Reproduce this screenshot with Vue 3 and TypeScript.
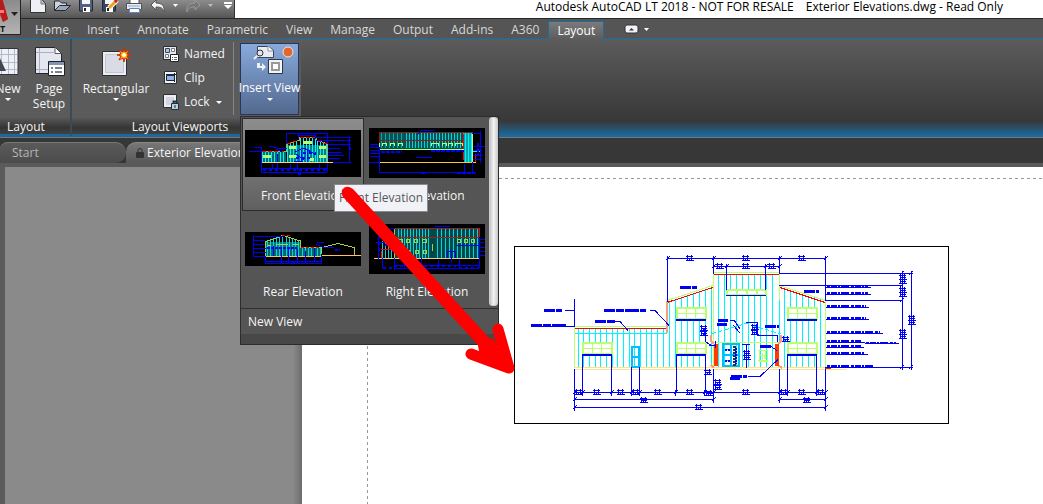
<script setup lang="ts">
import { ref } from 'vue'

interface Stroke { d: string; c: string; w?: number; dash?: string }
interface View { name: string; w: number; h: number; strokes: Stroke[] }

const BLUE = '#0000f5'
const CYAN = '#00f4ff'
const LIME = '#b9ff70'
const RED = '#ff0000'

const tabs = ['Home', 'Insert', 'Annotate', 'Parametric', 'View', 'Manage', 'Output', 'Add-ins', 'A360', 'Layout']
const active = ref('Layout')
const selected = ref('Front Elevation')

const line = (x1: number, y1: number, x2: number, y2: number) => `M${x1} ${y1}L${x2} ${y2}`
const box = (x: number, y: number, w: number, h: number) => `M${x} ${y}h${w}v${h}h${-w}z`

/* vertical siding boards; the top edge slopes from y1 to y2 */
function boards(x1: number, x2: number, step: number, y1: number, y2: number, base: number): string {
  let d = ''
  for (let x = x1; x <= x2; x += step) {
    const top = Math.round(y1 + ((y2 - y1) * (x - x1)) / (x2 - x1))
    d += `M${Math.floor(x) + 0.5} ${top}V${base}`
  }
  return d
}

/* window with a three by two grid of panes */
function panes(x: number, y: number, w: number, h: number): string {
  return box(x, y, w, h) + line(x + w / 3, y, x + w / 3, y + h) + line(x + (2 * w) / 3, y, x + (2 * w) / 3, y + h) + line(x, y + h / 2, x + w, y + h / 2)
}

/* dimension chain with end ticks */
function chain(y: number, xs: number[]): string {
  let d = line(xs[0], y, xs[xs.length - 1], y)
  for (const x of xs) d += line(x, y - 3, x, y + 3) + line(x - 2, y + 2, x + 2, y - 2)
  return d
}

/* dimension figures, drawn as two tight rows */
function figures(points: number[][]): string {
  return points.map(([x, y]) => `M${x - 4} ${y - 1.5}h7M${x - 3} ${y + 0.5}h6M${x - 4} ${y + 2.5}h8M${x - 2.5} ${y - 3}v6M${x + 1.5} ${y - 3}v6M${x - 0.5} ${y}v2`).join('')
}

const windows = [[582.5, 342.5], [676.5, 307.5], [676.5, 342.5], [787.5, 307.5], [787.5, 342.5]]
const notes = [[826, 287, 45], [826, 294, 45], [826, 307, 43], [826, 319, 43], [826, 333, 57], [826, 342, 39], [865, 343.5, 34], [826, 347, 38], [826, 354, 42], [826, 367, 52]]

const elevation: Stroke[] = [
  { c: CYAN, d: boards(578, 664, 5.67, 329, 329, 367) + boards(669, 712, 6, 301, 288, 367) + boards(718, 776, 6, 275, 275, 367) + boards(784, 822, 6, 288, 300, 367) + 'M575 333.5h92M713.5 274V343M779.5 274V343' },
  { c: '#ffffff', w: 12, d: 'M677 313.5h29M677 348.5h29M788 313.5h29M788 348.5h29M583 348.5h28' },
  { c: '#ffffff', w: 6, d: 'M726 292h40' },
  { c: LIME, d: windows.map(([x, y]) => panes(x, y, 29, 11)).join('') },
  { c: LIME, w: 2, d: windows.map(([x, y]) => box(x, y, 29, 11)).join('') + box(727, 290, 39, 5) + 'M736.5 290v5M746.5 290v5M756.5 290v5' },
  { c: LIME, d: 'M574.5 367V326.5H667M667 300.5L713 285.5M713.5 367V273M713 272.5H780M779.5 273V300M779 285.5L826 300.5M825.5 300V367M713 342.5H779M758 350h10M759 351v10h8v-10M762 353v7M765 351v8M758 360h10M760 355h4v4' },
  { c: RED, d: 'M575 328.5H667M667 302.5L713 287.5M714 274.5H779M780 287.5L825 302.5' },
  { c: '#ffe08c', d: 'M574 367.5H826M574 369.5H846' },
  { c: '#ff9c80', w: 2, d: 'M667 301V333M711 335v6l3 3M711 365l3 3M781 335v6l-3 3M778 365l4 3' },
  { c: '#c0361a', w: 2, d: 'M825 368h6' },
  { c: '#00bfff', w: 2, d: box(632, 347, 7, 20) + 'M632 357h7' + box(723, 344, 16, 22) + 'M731 344v22M723 355h16' },
  { c: '#ff3c00', w: 4, d: 'M716 344V366M777 344V366' },
  { c: '#183a50', w: 3, dash: '2 1', d: 'M734 346V366' },
  { c: CYAN, dash: '5 2', d: 'M711 334L746 323.5L781 334' },
  { c: BLUE, w: 2, d: 'M582 355h30M676 320h30M676 355h30M787 320h30M787 355h30' },
  { c: BLUE, d: 'M726 295.5h40M582.5 355v38M611.5 355v38M676.5 355v38M705.5 355v38M787.5 355v38M816.5 355v38M631.5 367v26M639.5 367v26M574.5 299V327M574.5 369V408M713.5 369V402M779.5 369V402M825.5 369V408M667.5 256V302M713.5 256V274M779.5 256V274M825.5 256V301M726.5 265V290M765.5 265V290' },
  { c: BLUE, d: chain(258.5, [667.5, 713.5, 779.5, 825.5]) + chain(266.5, [713.5, 726.5, 765.5, 779.5]) + chain(392.5, [574.5, 582.5, 611.5, 631.5, 639.5, 675.5, 704.5, 713.5, 779.5, 787.5, 816.5, 825.5]) + chain(399.5, [574.5, 713.5]) + chain(399.5, [779.5, 825.5]) + chain(407.5, [574.5, 825.5]) },
  { c: BLUE, d: 'M779 273.5H913M779 285.5H903M825 300.5H903M825 367.5H913M902.5 271V370M911.5 271V370M900 275l4-4M900 287l4-4M900 302l4-4M900 369l4-4M909 275l4-4M909 369l4-4' },
  { c: BLUE, d: figures([[690, 258], [746, 258], [802, 258], [720, 266], [746, 266], [772, 266], [579, 392], [597, 392], [621, 392], [636, 392], [658, 392], [690, 392], [709, 393], [746, 392], [784, 392], [802, 392], [821, 392], [644, 400], [699, 407], [807, 400], [903, 277], [903, 281], [903, 290], [903, 294], [903, 332], [903, 336], [912, 318], [912, 322], [708, 372], [718, 382], [718, 387], [747, 353], [747, 357], [704, 328], [704, 333], [755, 327], [755, 332], [786, 339]]) },
  { c: BLUE, w: 3, dash: '11 1 8 1 14 1', d: 'M604 310.5h42M595 321.5h20M531 325.5h36M544 310.5h18M680 287.5h17M804 291.5h15M718 320.5h10M717 324.5h10M765 326.5h14M760 346.5h11M731 376.5h16M730 378.5h10' },
  { c: BLUE, d: 'M531 326.5h43M565 310.5h9M650 310.5h5l14 15M615 321.5h5l8 9M730 320h4l6 9M733 325l7 8M746 322.5h11v13h20v6M704 328l2 14 6 4M748 376.5h12l18-17M709 345.5h7M715.5 341v7M746.5 344v24M742 344.5h8M771 346.5l6 4' },
  { c: '#16b5ff', d: 'M725 349h5M725 360h5' },
  { c: BLUE, w: 2, dash: '3 1 6 1 2 1 8 2', d: notes.map(([x, y, w]) => `M${x + 1} ${y - 1}h${w - 4}`).join('') },
  { c: BLUE, d: notes.map(([x, y, w]) => `M${x} ${Math.floor(y) + 0.5}h${w}`).join('') },
  { c: BLUE, w: 2, dash: '2 1', d: 'M725 350h6M725 361h6M736 348v16' },
]

const TEAL = '#006a6a'

const views: View[] = [
  {
    name: 'Front Elevation', w: 116, h: 47, strokes: [
      { c: TEAL, w: 11, d: 'M17 27h24' },
      { c: '#007d7d', w: 18, d: 'M42 24h40' },
      { c: CYAN, d: boards(17, 40, 3, 22, 22, 32) + boards(42, 53, 3, 15, 11, 32) + boards(55, 70, 3, 8, 8, 32) + boards(72, 83, 3, 11, 15, 32) },
      { c: '#a5b34a', d: 'M16.5 32V21.5H41.5V14.5L54 10.5V7.5H71V10L82.5 14V32' },
      { c: RED, dash: '4 2', d: 'M17 21.5H41M42 14L53 10.5M55 7.5H70M72 10.5L82 14' },
      { c: LIME, w: 3, d: 'M18 26.5h8M44 17.5h7M44 26.5h7M58 12.5h9M74 17.5h7M74 26.5h7M65 29h4' },
      { c: BLUE, d: 'M41 3.5h42M52 5.5h19M41.5 3v11M53.5 3v6M70.5 3v6M82.5 3v11M4 21.5h12M9 17.5h8M16.5 17v25M17 38.5h65M16 42.5h66M82.5 32v10M52.5 32v9M71 7.5h35M71 10.5h35M83 14.5h23M83 18.5h12M83 22.5h14M83 25.5h16M83 28.5h12M83 32.5h23M104.5 7v25M27.5 34v5M32.5 24v15M50 22l8-4 5 2 8 5M56.5 20v12M62.5 19v13M51 24l8 6M49 31h9M24 16l8 2h10M31 19l6 3M45.5 34v5M74.500 34v5' },
      { c: BLUE, w: 2, dash: '3 3', d: 'M18 40h64M58 23h13M51 28h14M105 17v6M53 44h6' },
      { c: '#ffd27a', d: 'M17 32.5h71' },
    ],
  },
  {
    name: 'Left Elevation', w: 116, h: 50, strokes: [
      { c: '#005558', w: 17, d: 'M11 12.5h84' },
      { c: '#00a9ad', d: boards(12, 34, 4, 5, 5, 20) },
      { c: '#00d2d8', d: boards(37, 94, 3, 5, 5, 20) },
      { c: '#008589', w: 8, d: 'M95 19h8' },
      { c: '#00a5a9', w: 30, d: 'M95 19h8' },
      { c: CYAN, d: 'M96.5 5v29M99.5 5v29M102.5 5v29M103 23.5h9' },
      { c: '#8c1a1a', d: 'M10 4.5h94M10 12.5h84M10.5 4v17' },
      { c: RED, d: 'M94.5 6v26M106.5 26v8' },
      { c: LIME, d: 'M10.5 15v6.5H95M103.5 5v29M13.5 18v-3h4v3M21.5 18v-3h4v3M29.5 18v-3h4v3M62.5 18v-3h7v3M73.5 18v-3h4v3M79.5 18v-3h4v3M86.5 18v-3h7v3' },
      { c: '#ffc83c', d: 'M10 34.5h97' },
      { c: BLUE, d: 'M53 2.5h13M48 7l5-5M10.5 20v25M1 16.5h9M1 19.5h10M1 22.5h9M1 25.5h9M1 28.5h9M0 34.5h10M10 44.5h97M103.5 34v12M95.5 36v8M103 5.5h9M111.5 3v32M104 18h12M104 22h9M104 27h10M104 31h9M47 29.5h16' },
      { c: BLUE, w: 2, dash: '4 1', d: 'M12 24h21M62 23h33M109 15v12M52 45h4M88 45h18' },
    ],
  },
  {
    name: 'Rear Elevation', w: 116, h: 34, strokes: [
      { c: '#007a7a', w: 14, d: 'M21 17h34' },
      { c: '#006969', w: 8, d: 'M21 20h55' },
      { c: '#00d5dd', d: boards(22, 38, 3, 9, 4, 24) + boards(41, 54, 3, 5, 9, 24) + boards(57, 76, 3, 16, 16, 24) },
      { c: '#a6d23c', d: 'M20.5 24V9.5L38 3.5L55.5 9V15H76.5V22M77 15.5L93 11.5L109 15.5V23M22 13h4M31 12h12M48 12h6' },
      { c: RED, dash: '3 2', d: 'M37 3.5h8M56 15.5h20' },
      { c: '#ffc15c', d: 'M20 24.5h57M77 23.5h39' },
      { c: BLUE, d: 'M8.5 3v22M8 4.5h30M8 8.5h12M8 12.5h12M8 16.5h13M8 20.5h13M8 24.5h12M20.5 24v8M20 29.5h57M20 31.5h57M76.5 24v8M28.5 14v10M36.5 17v14M43.5 17v14M52.5 17v14M60.5 19v12M69.5 16v14M71 12l6 3h12M72 10.5h7' },
      { c: BLUE, w: 2, dash: '3 1', d: 'M22 16h30M47 31h4M90 18h5' },
    ],
  },
  {
    name: 'Right Elevation', w: 116, h: 50, strokes: [
      { c: '#00484a', w: 29, d: 'M26 19.5h84' },
      { c: '#00d5dd', d: boards(29, 60, 3, 5, 5, 34) + boards(68, 109, 4, 5, 5, 34) + boards(13, 24, 3, 17, 17, 34) },
      { c: '#a81c1c', d: 'M25 4.5h85M25.5 4v14M25 13.5h85' },
      { c: RED, d: 'M110.5 4v9M12.5 27v8M12 25.5h13' },
      { c: '#a7d23e', d: 'M25.5 34V5M30.5 18v-3h3v3zM37.5 18v-3h3v3zM45.5 18v-3h3v3zM53.5 18v-3h4v3zM88.5 18v-3h3v3zM95.5 18v-3h3v3zM102.5 18v-3h3v3zM37.5 29v-3h3v3zM46.5 29v-3h3v3zM54.5 29v-3h3v3zM63.5 20v7' },
      { c: '#ffc978', d: 'M5 34.5h106' },
      { c: BLUE, d: 'M65 2.5h16M6 4.5h20M9.5 3v33M13.5 34v10M25.5 34v12M25 44.5h85M25 41.5h85M110.5 14v30M111 15.5h5M111 18.5h4M111 23.5h5M111 27.5h5M111 31.5h5M87 21.5h23M78.5 34v-7h8v7M82.5 27v12M35.5 34v10M52.5 34v8M69.5 36v8M90.5 35v9M7 18.5h14M8 13.5h10' },
      { c: BLUE, w: 2, dash: '3 3', d: 'M25 42h62M14 44h9M90 44h20M10 18v10M16 21h12' },
    ],
  },
]
</script>

<template>
  <div class="app">
    <header class="titlebar">
      <div class="quick">
        <button aria-label="New file"><svg width="20" height="18"><path d="M2.500-1v13.500h15V4l-4-5" fill="#eef0f6" stroke="#333" /><path d="M13 0v4h4" fill="#b9bdc7" stroke="#777" /></svg></button>
        <button aria-label="Open"><svg width="20" height="18"><path d="M2.500 10V1h5l2 2h5v3" fill="#cdd3df" stroke="#252a33" /><path d="M2.500 10.500l5-5h11l-5 5z" fill="#9ba6b7" stroke="#252a33" /></svg></button>
        <button aria-label="Save"><svg width="20" height="18"><path d="M3.500-1v12h13V-1z" fill="#536080" stroke="#20283a" /><path d="M6 0h8v4H6z" fill="#f2f4f8" /><path d="M7 7h7v5H7z" fill="#fff" /><path d="M8 8h2v3H8z" fill="#222" /></svg></button>
        <button aria-label="Save as"><svg width="20" height="18"><path d="M2.500-1v12h13V-1z" fill="#39435c" stroke="#20283a" /><path d="M5 0h8v4H5z" fill="#f2f4f8" /><path d="M6 7h7v5H6z" fill="#fff" /><path d="M7 8h2v3H7z" fill="#222" /><path d="M9 8l8-8" stroke="#fff" stroke-width="5" /><path d="M9 8l7-7" stroke="#f0a21c" stroke-width="3" /><path d="M15 2l2-2" stroke="#c22" stroke-width="3" /></svg></button>
        <button aria-label="Plot"><svg width="20" height="18"><path d="M6-1h9v6H6z" fill="#fff" stroke="#555" /><path d="M2.500 3.500h15v6h-15z" fill="#e7ebf4" stroke="#4c515a" /><path d="M5.500 8.500h10v4h-10z" fill="#fff" stroke="#5c88c0" /><path d="M4 6h12" stroke="#9aa6ba" /></svg></button>
        <button aria-label="Undo"><svg width="20" height="18"><path d="M8 0L3 5l5 5V7c5 0 7 1 8 5 1-6-2-9-8-9z" fill="#f4f4f4" stroke="#555" /></svg></button>
        <button class="tiny" aria-label="Undo list"><svg width="7" height="18"><path d="M1 4h5L3.500 7z" fill="#fff" /></svg></button>
        <button aria-label="Redo"><svg width="20" height="18"><path d="M12 0l5 5-5 5V7c-5 0-7 1-8 5-1-6 2-9 8-9z" fill="#777" stroke="#999" /></svg></button>
        <button class="tiny" aria-label="Redo list"><svg width="7" height="18"><path d="M1 4h5L3.500 7z" fill="#bbb" /></svg></button>
        <button class="custom" aria-label="Customize"><svg width="10" height="18"><path d="M1 2h8v2H1zM1 5h8L5 9z" fill="#fff" /></svg></button>
      </div>
      <h1><span>Autodesk AutoCAD LT 2018 - NOT FOR RESALE</span><span>Exterior Elevations.dwg - Read Only</span></h1>
      <button class="logo" aria-label="Application menu">
        <svg width="20" height="34"><path d="M-3-2h5l6 21-5 3-3-7-4-2z" fill="#d92a25" /><path d="M2-2l6 21-5 3L-2 4z" fill="#b51c1c" /><path d="M-2 10h6v3h-6z" fill="#f77" /><path d="M11 12h7l-3.500 4z" fill="#222" /></svg>
        <b>LT</b>
      </button>
    </header>

    <nav class="tabs">
      <button v-for="t in tabs" :key="t" :class="{ on: t === active }" @click="active = t">{{ t }}</button>
      <button class="toggle" aria-label="Minimize ribbon">
        <svg width="30" height="12"><rect x="1" y="1" width="13" height="8" rx="2" fill="#f2f3f6" stroke="#33353b" /><path d="M5 6.500h5L7.500 4z" fill="#333" /><path d="M20 4h5l-2.500 3z" fill="#fff" /></svg>
      </button>
    </nav>

    <section class="ribbon">
      <div class="panel first">
        <div class="tools">
          <button class="big new">
            <svg width="34" height="32"><path d="M-1 2.500h22v26H-1z" fill="#edf0f6" stroke="#30343c" /><path d="M4.500 3v25M11.500 3v25M17.500 3v25M-1 8.500h21M-1 16.500h21M-1 23.500h21" stroke="#b3b9c7" /><path d="M-6 25L1 8l8 17z" fill="#3f4654" /></svg>
            <span>New</span><i></i>
          </button>
          <button class="big setup">
            <svg width="34" height="32"><path d="M3.500 1.500h20l6 6v20h-26z" fill="#e4e7ef" stroke="#23262c" /><path d="M23 1.500v6h6" fill="#fff" stroke="#555" /><path d="M7.500 2v25M4 6.500h20M4 23.500h15" stroke="#aab0c0" /><path d="M16.500 15.500h16v14h-16z" fill="#fff" stroke="#1d2025" /><path d="M17 17.500h15" stroke="#8494b0" stroke-width="3" /><path d="M19 22h2M23 22h7M19 26h2M23 26h7" stroke="#778296" stroke-width="2" /></svg>
            <span>Page<br>Setup</span>
          </button>
        </div>
        <h2>Layout</h2>
      </div>
      <div class="panel viewports">
        <div class="tools">
          <button class="big rect">
            <svg width="34" height="32"><path d="M3.500 5.500h24v24h-24z" fill="#eceef3" stroke="#2d2f34" /><path d="M6.500 8.500h18v18h-18z" fill="#d9dce5" stroke="#c1c5d0" /><path d="M25 2l1 4 4-2-2 4 4 1-4 1 2 4-4-2-1 4-1-4-4 2 2-4-4-1 4-1-2-4 4 2z" fill="#ffb000" stroke="#c82a10" /><circle cx="25" cy="9" r="2" fill="#fffbe0" /></svg>
            <span>Rectangular</span><i></i>
          </button>
          <div class="stack">
            <button><svg width="16" height="16"><path d="M.500.500h13v13H.500z" fill="#e5e8ef" stroke="#2a2d33" /><path d="M2.500 2.500h4v4h-4z" fill="#a9c6ec" stroke="#3c4453" /><path d="M8.500 2.500h3v3h-3zM2.500 8.500h3v3h-3z" fill="#fff" stroke="#777" /><path d="M7.500 8.500h8v7h-8z" fill="#fff" stroke="#222" /><path d="M9 11.500h1M11 11.500h3M9 13.500h1M11 13.500h3" stroke="#5a6578" /></svg>Named</button>
            <button><svg width="16" height="16"><path d="M1.500 1.500h12v12h-12z" fill="#eef1f6" stroke="#2a2d33" /><path d="M3.500 5.500h8v5h-8z" fill="#8fb4e4" stroke="#1b2535" /><path d="M3 4.500h10M11.500 3v9" stroke="#1b2535" /></svg>Clip</button>
            <button><svg width="16" height="16"><path d="M.500.500h13v13H.500z" fill="#eceef3" stroke="#2d2f34" /><path d="M3 3h8v8H3z" fill="#d3d6df" /><path d="M10.500 10V7.500h3V10" fill="none" stroke="#253340" stroke-width="2" /><path d="M8.500 9.500h7v6h-7z" fill="#b9cfdf" stroke="#22303b" /><path d="M12 11v3" stroke="#22303b" /></svg>Lock<i></i></button>
          </div>
        </div>
        <h2>Layout Viewports</h2>
      </div>
      <div class="dropdown">
        <button class="insert">
          <svg width="48" height="34"><path d="M11.500 2.500h11l5 4v7h-16z" fill="#e7ebf2" stroke="#38445a" /><path d="M22 2v5h5" fill="#fff" stroke="#8893a5" /><circle cx="14" cy="9" r="3" fill="#dfe6ef" stroke="#333" /><path d="M11.500 11.500L8 15" stroke="#eee" stroke-width="2" /><circle cx="42" cy="8" r="5" fill="#e2672d" stroke="#f3e6dd" /><path d="M11 19h3v3h2v-3l4 4-4 4v-3h-5z" fill="#eef0f4" /><path d="M22.500 15.500h14v14h-14z" fill="#f3f4f6" stroke="#2c3646" /><path d="M26 19h7v7h-7z" fill="#fff" stroke="#999" stroke-width="2" /></svg>
          <span>Insert View</span><i></i>
        </button>
        <div class="menu">
          <div class="gallery">
            <div class="grid">
              <button v-for="v in views" :key="v.name" :class="{ on: v.name === selected }" @click="selected = v.name">
                <span class="thumb">
                  <svg :width="v.w" :height="v.h" :viewBox="`0 0 ${v.w} ${v.h}`" fill="none" shape-rendering="crispEdges">
                    <path v-for="(s, i) in v.strokes" :key="i" :d="s.d" :stroke="s.c" :stroke-width="s.w ?? 1" :stroke-dasharray="s.dash" />
                  </svg>
                </span>
                <span>{{ v.name }}</span>
              </button>
            </div>
            <div class="scroll"></div>
          </div>
          <button class="newview">New View</button>
          <div class="grip"></div>
          <div class="tip" role="tooltip">Front Elevation</div>
        </div>
      </div>
      <div class="rest"></div>
    </section>

    <nav class="files">
      <button class="start">Start</button>
      <button class="file"><svg width="8" height="12"><path d="M2 6V3.500a2 2 0 0 1 4 0V6" fill="none" stroke="#333" stroke-width="1" /><rect y="5" width="8" height="6" rx="1" fill="#333" /></svg>Exterior Elevations</button>
    </nav>

    <main class="canvas">
      <div class="margin"></div>
      <div class="paper">
        <div class="printable">
          <svg class="drawing" width="435" height="178" viewBox="514 246 435 178" fill="none" shape-rendering="crispEdges">
            <path d="M514.500 246.500h434v177h-434z" stroke="#000" fill="#fff" />
            <path v-for="(s, i) in elevation" :key="i" :d="s.d" :stroke="s.c" :stroke-width="s.w ?? 1" :stroke-dasharray="s.dash" />
          </svg>
        </div>
      </div>
    </main>

    <svg class="arrow" width="180" height="195" viewBox="338 184 180 195" fill="#f00">
      <path d="M344 198L478 345Q484 356 494 356Q499 350 491 340L353 189Q346 184 342 190Q341 195 344 198z" />
      <path d="M498 329L509 368L471 354M484 346L506 366" fill="none" stroke="#f00" stroke-width="11" stroke-linecap="round" stroke-linejoin="round" />
      <path d="M478 345L493 338L512 372L480 357z" />
    </svg>
  </div>
</template>

<style>
html, body, #app { height: 100%; }
body { margin: 0; }
</style>

<style scoped>
.app { position: relative; display: flex; flex-direction: column; min-height: 100vh; overflow: hidden; background: #373737; color: #f4f4f4; font: 12px/16px "Open Sans", "Noto Sans", sans-serif; }
* { box-sizing: border-box; }
button { margin: 0; padding: 0; border: 0; background: none; color: inherit; font: inherit; white-space: nowrap; }
svg { display: block; flex: none; }
h1, h2 { margin: 0; font: inherit; }
i { width: 0; height: 0; border: 3px solid transparent; border-top-color: #fff; border-bottom: 0; }

.titlebar { position: relative; display: flex; height: 18px; background: #fff; color: #000; }
.quick { display: flex; width: 235px; padding-left: 28px; gap: 4px; background: linear-gradient(#8c8c8c, #555); border-right: 1px solid #333; overflow: hidden; }
.quick .tiny { width: 7px; }
.quick .custom { margin-left: 5px; }
h1 { flex: 1; display: flex; justify-content: flex-end; gap: 12px; padding-right: 40px; line-height: 13px; white-space: nowrap; }
.logo { position: absolute; left: 0; top: 0; z-index: 2; width: 21px; height: 35px; overflow: hidden; background: linear-gradient(#8b8b8b, #b4b4b4); border: 1px solid #222; border-width: 0 1px 1px 0; }
.logo b { position: absolute; left: -5px; top: 24px; color: #111; font-size: 9px; line-height: 9px; }

.tabs { display: flex; height: 21px; padding: 2px 0 0 26px; background: #555; border-top: 1px solid #272727; border-bottom: 1px solid #1a6ca5; color: #d8d8d8; }
.tabs button { padding: 0 9px; }
.tabs .on { height: 18px; margin-bottom: -1px; padding: 0 8px; border: 1px solid #1a6ca5; border-bottom: 0; background: linear-gradient(#7a7a7a, #5c5c5c); color: #fff; line-height: 14px; }
.tabs .toggle { padding: 0 20px; }

.ribbon { display: flex; height: 98px; background: linear-gradient(#5c5c5c, #383838 82px, #1b6aa0 97px); }
.panel { display: flex; flex: none; flex-direction: column; background: #5b5b5b; border-bottom: 3px solid #1d679b; }
.panel h2 { height: 16px; text-align: center; line-height: 18px; background: linear-gradient(#575757, #353535 60%, #414141); }
.tools { display: flex; height: 79px; }
.first { width: 72px; border-right: 2px solid #3c4a55; overflow: hidden; }
.first h2 { padding-right: 18px; }
.viewports { width: 168px; }
.viewports h2 { padding-left: 48px; }
.big { display: flex; flex: none; flex-direction: column; align-items: center; padding-top: 7px; line-height: 15px; }
.big span { padding-top: 3px; }
.big i { margin-top: 2px; }
.new { width: 28px; margin-left: -6px; }
.new svg { margin-left: 12px; }
.setup { width: 54px; }
.rect { width: 88px; margin-right: 3px; }
.stack { display: flex; flex-direction: column; flex: 1; margin: 3px 6px 3px 0; border-right: 1px solid #858585; }
.stack button { display: flex; align-items: center; gap: 5px; height: 24px; padding-left: 0; }
.stack i { margin-left: 1px; }

.dropdown { position: relative; z-index: 3; width: 61px; background: #5b5b5b; border-bottom: 3px solid #1d679b; }
.insert { display: flex; flex-direction: column; align-items: center; width: 59px; height: 72px; margin-top: 4px; background: linear-gradient(#88aadc, #53698f); border: 1px solid #27375c; color: #fff; }
.insert span { padding-top: 2px; }
.insert i { margin-top: 2px; }
.menu { position: absolute; left: 0; top: 77px; width: 259px; background: #555; border: 1px solid #2c2c2c; }
.gallery { display: flex; border-bottom: 1px solid #303030; }
.grid { flex: 1; display: grid; grid-template-columns: 122px 122px; gap: 3px 2px; padding: 1px 0 1px 1px; }
.grid button { display: flex; flex-direction: column; align-items: center; height: 93px; padding-top: 9px; border: 1px solid transparent; }
.grid .on { border-color: #2c2c2c; background: linear-gradient(#8d8d8d, #606060); }
.thumb { display: flex; align-items: center; height: 50px; margin-bottom: 10px; }
.thumb svg { background: #000; }
.scroll { width: 9px; margin-bottom: 2px; border: 1px solid #ccc; border-radius: 3px; background: linear-gradient(90deg, #c4c4c4, #f3f3f3, #d2d2d2); }
.newview { display: block; width: 100%; height: 25px; padding-left: 7px; text-align: left; }
.grip { height: 10px; background: #484848; }
.tip { position: absolute; left: 93px; top: 67px; padding: 5px 4px; border: 1px solid #8a8a8a; background: #f1f2f7; color: #575757; white-space: nowrap; }
.rest { flex: 1; }

.files { display: flex; height: 30px; padding-top: 4px; border-top: 1px solid #777; border-bottom: 4px solid #5a5a5a; background: #373737; }
.start { width: 126px; padding-left: 12px; text-align: left; border-radius: 10px 14px 14px 0; background: linear-gradient(#5a5a5a, #4c4c4c); color: #b6b6b6; border-top: 1px solid #777; }
.file { display: flex; align-items: center; gap: 3px; width: 150px; padding-left: 10px; border-radius: 10px 10px 0 0; background: linear-gradient(#777, #585858); border-top: 1px solid #888; }

.canvas { flex: 1; display: flex; min-height: 337px; background: #8a8a8a; border-left: 5px solid #5b5b5b; }
.margin { width: 297px; background: linear-gradient(90deg, #8a8a8a 97%, #6c6c6c); }
.paper { flex: 1; padding: 11px 0 0 65px; background: #fff; }
.printable {
  height: 100%;
  padding: 68px 0 0 147px;
  background:
    repeating-linear-gradient(90deg, #999 0 3px, transparent 3px 6px) top / 100% 1px no-repeat,
    repeating-linear-gradient(#999 0 3px, transparent 3px 6px) left / 1px 100% no-repeat;
}
.arrow { position: absolute; left: 338px; top: 184px; z-index: 5; pointer-events: none; }
</style>
